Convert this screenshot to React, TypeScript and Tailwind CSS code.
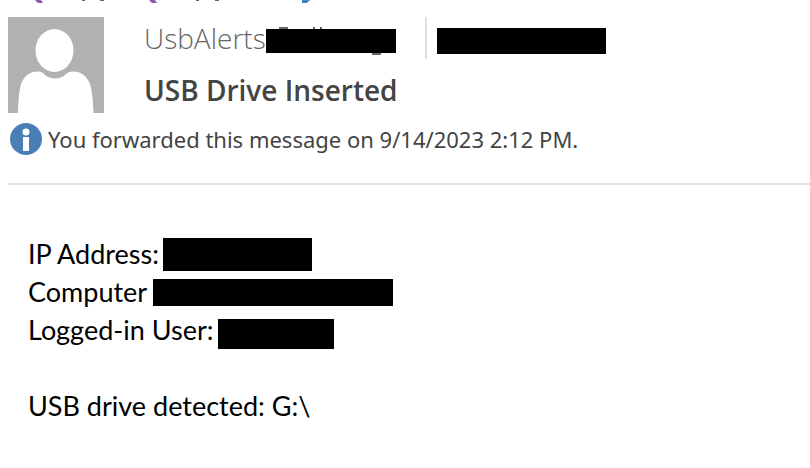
const fields = [
  { label: "IP Address:", bar: "ml-1 h-[33px] w-[149px]" },
  { label: "Computer", bar: "ml-1.5 h-[27px] w-[240px]" },
  { label: "Logged-in User:", bar: "ml-1 h-[30px] w-[116px] self-end" },
];

export default function App() {
  return (
    <main className="min-h-screen bg-white pl-2 font-['Open_Sans','Noto_Sans',sans-serif] text-[#444444]">
      <svg className="block h-[17px] w-[330px]" viewBox="0 0 330 17" aria-hidden="true">
        <path fill="#8c5bb0" d="M27 0h6l2 3h-5zM141 0h6l2 3h-5z" />
        <path fill="#666666" d="M74 0h3v1h-3zM92 0h4v1h-4zM188 0h3v1h-3zM207 0h4v1h-4z" />
        <path fill="#4a7fb8" d="M294 0h8l-3 3h-5z" />
      </svg>
      <header className="flex items-start">
        <svg className="size-24 shrink-0" viewBox="0 0 96 96" role="img" aria-label="Sender">
          <path fill="#b1b1b1" d="M0 0h96v96H0z" />
          <ellipse cx="46.500" cy="33.500" rx="19" ry="21.500" fill="#fff" />
          <path
            fill="#fff"
            d="M10 96c.5-13 1-22 3-29 3-8 9-12.500 17-12.500 3 0 5 1 7 3.500 5 4.500 15 4.500 20 0 2-2.500 5-3.500 8-3.500 8 0 14 4.500 17 12.500 2 7 3 16 3.500 29z"
          />
        </svg>
        <div className="ml-10">
          <div className="flex h-[42px] items-center">
            <span className="text-[28px] font-light text-[#666666]">UsbAlerts</span>
            <svg className="mt-1.5 h-7 w-[130px]" viewBox="0 0 130 28" aria-hidden="true">
              <path fill="#666666" d="M13 0h9v2h-9zM47 0h2v2h-2zM54 0h2v2h-2zM106 26h9v2h-9z" />
              <path d="M0 2h130v24H0z" />
            </svg>
            <span className="ml-[29px] h-full w-[2px] bg-[#e1e1e1]" />
            <span className="mt-1.5 ml-[10px] h-[26px] w-[169px] bg-black" />
          </div>
          <h1 className="mt-[11px] text-[28px] leading-10 font-semibold">USB Drive Inserted</h1>
        </div>
      </header>
      <p className="mt-[6px] flex h-10 items-center gap-1.5 pl-0.5 font-['Noto_Sans',sans-serif] text-[22px]">
        <svg className="size-8 shrink-0" viewBox="0 0 32 32" aria-hidden="true">
          <circle cx="16" cy="16" r="16" fill="#4a7fb5" />
          <circle cx="16" cy="9" r="3.500" fill="#fff" />
          <path fill="#fff" d="M13 14h6v14h-6z" />
        </svg>
        You forwarded this message on 9/14/2023 2:12 PM.
      </p>
      <hr className="mt-6 border-t-2 border-[#e1e1e1]" />
      <div className="mt-[50px] pl-5 font-['Lato',sans-serif] text-[27px] leading-[38px] text-black">
        {fields.map((f) => (
          <div key={f.label} className="flex h-[38px] items-center">
            {f.label}
            <span className={`bg-black ${f.bar}`} />
          </div>
        ))}
        <p className="mt-[38px]">USB drive detected: G:\</p>
      </div>
    </main>
  );
}
